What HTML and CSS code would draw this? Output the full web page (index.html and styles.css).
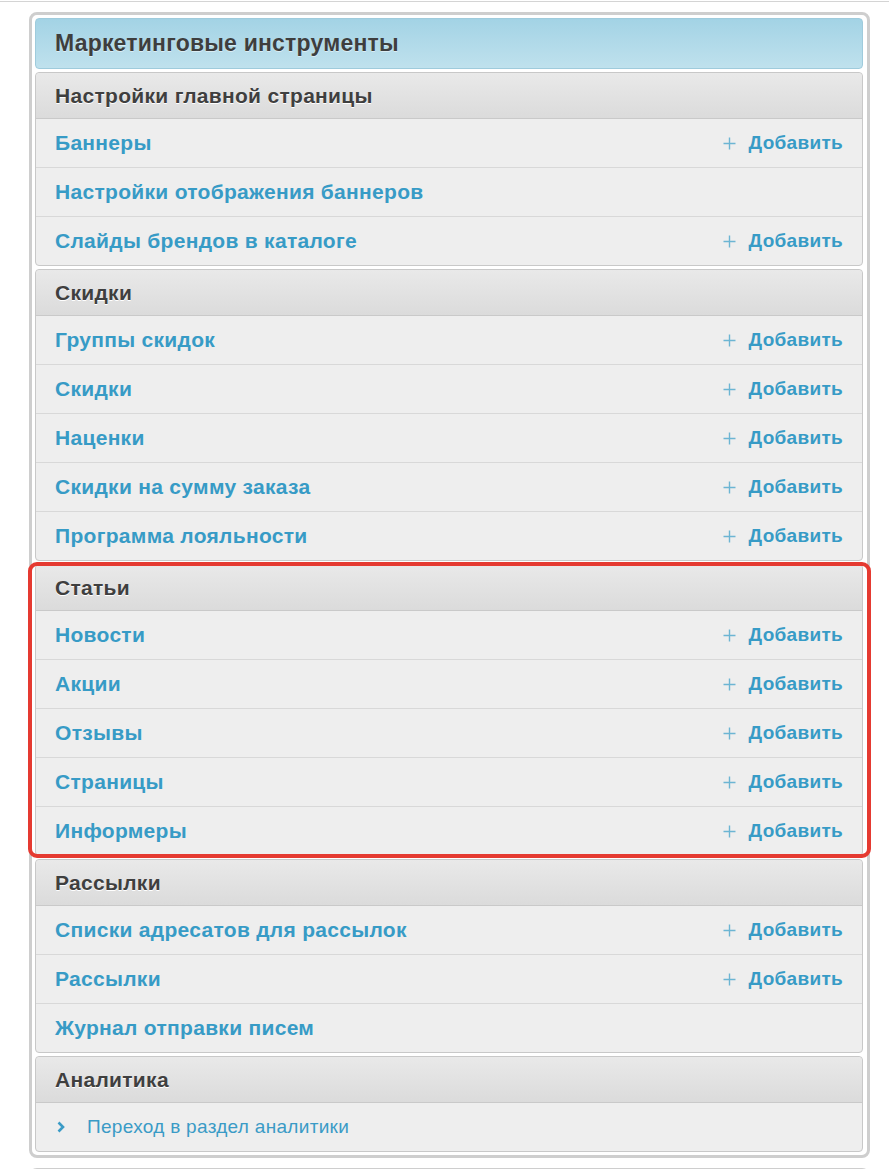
FILE: index.html
```html
<!DOCTYPE html>
<html lang="ru">
<head>
<meta charset="utf-8">
<title>Маркетинговые инструменты</title>
<link rel="stylesheet" href="styles.css">
</head>
<body>
<div class="frame">
  <div class="panel">
    <div class="title">Маркетинговые инструменты</div>

    <div class="section">
      <div class="sec-head">Настройки главной страницы</div>
      <div class="row"><a class="link">Баннеры</a><a class="add"><svg class="plus" viewBox="0 0 13 13"><path d="M6.5 0.5v12M0.5 6.5h12"/></svg>Добавить</a></div>
      <div class="row"><a class="link">Настройки отображения баннеров</a></div>
      <div class="row"><a class="link">Слайды брендов в каталоге</a><a class="add"><svg class="plus" viewBox="0 0 13 13"><path d="M6.5 0.5v12M0.5 6.5h12"/></svg>Добавить</a></div>
    </div>

    <div class="section">
      <div class="sec-head">Скидки</div>
      <div class="row"><a class="link">Группы скидок</a><a class="add"><svg class="plus" viewBox="0 0 13 13"><path d="M6.5 0.5v12M0.5 6.5h12"/></svg>Добавить</a></div>
      <div class="row"><a class="link">Скидки</a><a class="add"><svg class="plus" viewBox="0 0 13 13"><path d="M6.5 0.5v12M0.5 6.5h12"/></svg>Добавить</a></div>
      <div class="row"><a class="link">Наценки</a><a class="add"><svg class="plus" viewBox="0 0 13 13"><path d="M6.5 0.5v12M0.5 6.5h12"/></svg>Добавить</a></div>
      <div class="row"><a class="link">Скидки на сумму заказа</a><a class="add"><svg class="plus" viewBox="0 0 13 13"><path d="M6.5 0.5v12M0.5 6.5h12"/></svg>Добавить</a></div>
      <div class="row"><a class="link">Программа лояльности</a><a class="add"><svg class="plus" viewBox="0 0 13 13"><path d="M6.5 0.5v12M0.5 6.5h12"/></svg>Добавить</a></div>
    </div>

    <div class="section highlight">
      <div class="sec-head">Статьи</div>
      <div class="row"><a class="link">Новости</a><a class="add"><svg class="plus" viewBox="0 0 13 13"><path d="M6.5 0.5v12M0.5 6.5h12"/></svg>Добавить</a></div>
      <div class="row"><a class="link">Акции</a><a class="add"><svg class="plus" viewBox="0 0 13 13"><path d="M6.5 0.5v12M0.5 6.5h12"/></svg>Добавить</a></div>
      <div class="row"><a class="link">Отзывы</a><a class="add"><svg class="plus" viewBox="0 0 13 13"><path d="M6.5 0.5v12M0.5 6.5h12"/></svg>Добавить</a></div>
      <div class="row"><a class="link">Страницы</a><a class="add"><svg class="plus" viewBox="0 0 13 13"><path d="M6.5 0.5v12M0.5 6.5h12"/></svg>Добавить</a></div>
      <div class="row"><a class="link">Информеры</a><a class="add"><svg class="plus" viewBox="0 0 13 13"><path d="M6.5 0.5v12M0.5 6.5h12"/></svg>Добавить</a></div>
    </div>

    <div class="section">
      <div class="sec-head">Рассылки</div>
      <div class="row"><a class="link">Списки адресатов для рассылок</a><a class="add"><svg class="plus" viewBox="0 0 13 13"><path d="M6.5 0.5v12M0.5 6.5h12"/></svg>Добавить</a></div>
      <div class="row"><a class="link">Рассылки</a><a class="add"><svg class="plus" viewBox="0 0 13 13"><path d="M6.5 0.5v12M0.5 6.5h12"/></svg>Добавить</a></div>
      <div class="row"><a class="link">Журнал отправки писем</a></div>
    </div>

    <div class="section">
      <div class="sec-head">Аналитика</div>
      <div class="row"><a class="goto"><svg class="chev" viewBox="0 0 8 12"><path d="M1.5 1.5l4.5 4.5-4.5 4.5"/></svg>Переход в раздел аналитики</a></div>
    </div>
  </div>
  <div class="panel next"></div>
</div>
</body>
</html>
```

FILE: styles.css
```css
html, body {
  margin: 0;
  padding: 0;
  background: #fff;
}
body {
  font-family: "Liberation Sans", Arial, Helvetica, sans-serif;
  overflow: hidden;
}
.frame {
  margin-top: 1px;
  width: 889px;
  border-top: 1px solid #d4d4d4;
  padding-top: 10px;
}
.panel {
  margin-left: 29px;
  width: 841px;
  box-sizing: border-box;
  border: 3px solid #cecece;
  border-radius: 8px;
  padding: 3px 4px 3px 3px;
  background: #fff;
}
.panel.next {
  margin-top: 10px;
  height: 40px;
}
.title {
  height: 51px;
  box-sizing: border-box;
  border: 1px solid #9fcbdc;
  border-radius: 4px;
  background: linear-gradient(#a3d3e5, #bfe1ed);
  padding-left: 19px;
  display: flex;
  align-items: center;
  font-size: 23px;
  letter-spacing: 0.2px;
  font-weight: bold;
  color: #3e3e3e;
  text-shadow: 0 1px 0 rgba(255,255,255,0.5);
}
.section {
  margin-top: 3px;
  border: 1px solid #c8c8c8;
  border-radius: 4px;
  background: #eeeeee;
}
.sec-head {
  height: 45px;
  border-bottom: 1px solid #c9c9c9;
  border-radius: 4px 4px 0 0;
  background: linear-gradient(#e9e9e9, #dbdbdb);
  padding: 0 19px;
  display: flex;
  align-items: center;
  font-size: 21px;
  letter-spacing: 0.3px;
  font-weight: bold;
  color: #3f3f3f;
  text-shadow: 0 1px 0 #fff;
}
.row {
  height: 48px;
  padding: 0 19px;
  display: flex;
  align-items: center;
  justify-content: space-between;
}
.row + .row {
  border-top: 1px solid #d8d8d8;
}
.link, .add {
  font-weight: bold;
  color: #379bc6;
  text-decoration: none;
  letter-spacing: 0.3px;
}
.link {
  font-size: 21px;
}
.add {
  font-size: 19px;
  display: flex;
  align-items: center;
}
.plus {
  width: 13px;
  height: 13px;
  margin-right: 13px;
  fill: none;
  stroke: #6cb5d3;
  stroke-width: 1.4;
}
.goto {
  display: flex;
  align-items: center;
  font-size: 19px;
  letter-spacing: 0.3px;
  color: #3a9bc6;
}
.chev {
  width: 8px;
  height: 12px;
  margin-left: 2px;
  margin-right: 22px;
  fill: none;
  stroke: #3a9bc6;
  stroke-width: 2.6;
}
.highlight {
  position: relative;
}
.highlight::after {
  content: "";
  position: absolute;
  top: -3px;
  left: -8px;
  right: -9px;
  bottom: -3px;
  border: 4px solid #e53a31;
  border-radius: 9px;
  pointer-events: none;
}
```
